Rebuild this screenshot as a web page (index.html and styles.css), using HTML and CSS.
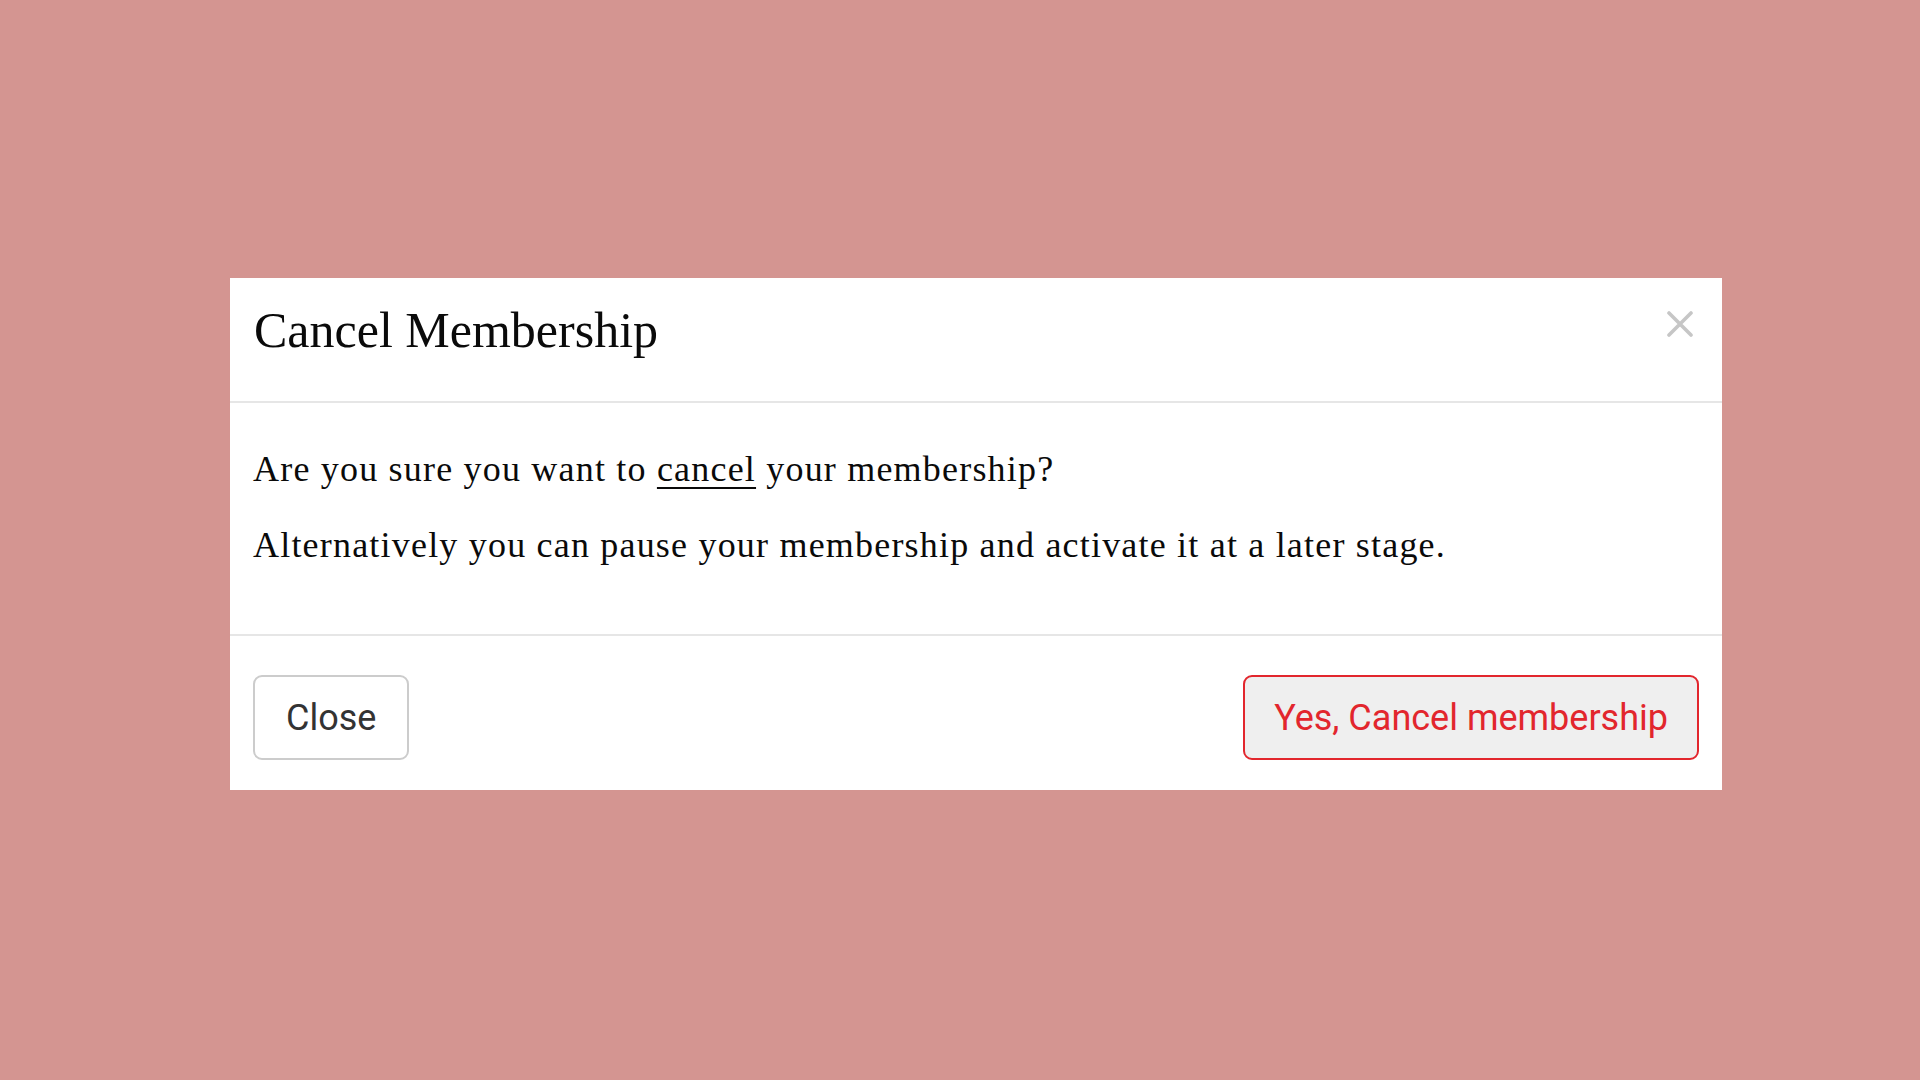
FILE: index.html
```html
<!DOCTYPE html>
<html lang="en">
<head>
<meta charset="utf-8">
<title>Cancel Membership</title>
<link rel="stylesheet" href="styles.css">
</head>
<body>
  <div class="modal">
    <div class="modal-header">
      <h1 class="modal-title">Cancel Membership</h1>
      <button class="modal-close" aria-label="Close">
        <svg width="26" height="26" viewBox="0 0 26 26" aria-hidden="true">
          <path d="M2 2 L24 24 M24 2 L2 24" stroke="#c6c6c6" stroke-width="3.6" stroke-linecap="round" fill="none"/>
        </svg>
      </button>
    </div>
    <div class="modal-body">
      <p class="text">Are you sure you want to <u class="link">cancel</u> your membership?</p>
      <p class="text">Alternatively you can pause your membership and activate it at a later stage.</p>
    </div>
    <div class="modal-footer">
      <button class="btn btn-secondary">Close</button>
      <button class="btn btn-danger">Yes, Cancel membership</button>
    </div>
  </div>
</body>
</html>
```

FILE: styles.css
```css
html, body {
  margin: 0;
  padding: 0;
}

body {
  background: #d49591;
  width: 1920px;
  height: 1080px;
  box-sizing: border-box;
  padding: 278px 0 0 230px;
  overflow: hidden;
}

.modal {
  width: 1492px;
  background: #ffffff;
  display: flex;
  flex-direction: column;
}

.modal-header {
  height: 123px;
  box-sizing: content-box;
  border-bottom: 2px solid #e6e6e6;
  display: flex;
  justify-content: space-between;
  align-items: flex-start;
  padding: 0 29px 0 24px;
}

.modal-title {
  margin: 27px 0 0;
  font-family: "Liberation Serif", "Times New Roman", serif;
  font-weight: 400;
  font-size: 50px;
  line-height: 50px;
  color: #0a0a0a;
}

.modal-close {
  margin-top: 33px;
  padding: 0;
  border: 0;
  background: none;
  width: 26px;
  height: 26px;
  display: block;
}

.modal-close svg {
  display: block;
}

.modal-body {
  padding: 46px 23px 69px;
  border-bottom: 2px solid #e6e6e6;
  display: flex;
  flex-direction: column;
  gap: 36px;
}

.text {
  margin: 0;
  font-family: "Liberation Serif", "Times New Roman", serif;
  font-size: 36px;
  line-height: 40px;
  letter-spacing: 1.2px;
  color: #0a0a0a;
}

.link {
  text-decoration: underline;
  text-decoration-thickness: 2px;
  text-underline-offset: 6px;
}

.modal-footer {
  display: flex;
  justify-content: space-between;
  align-items: center;
  padding: 39px 23px 30px;
}

.btn {
  height: 85px;
  padding: 0 31px;
  border-radius: 9px;
  border: 2px solid #cccccc;
  background: #ffffff;
  font-family: Roboto, "Liberation Sans", sans-serif;
  font-size: 36px;
  line-height: 1;
  color: #333333;
  box-sizing: border-box;
}

.btn-danger {
  padding: 0 29px;
  background: #efefef;
  border-color: #e2262d;
  color: #e2262d;
}
```
